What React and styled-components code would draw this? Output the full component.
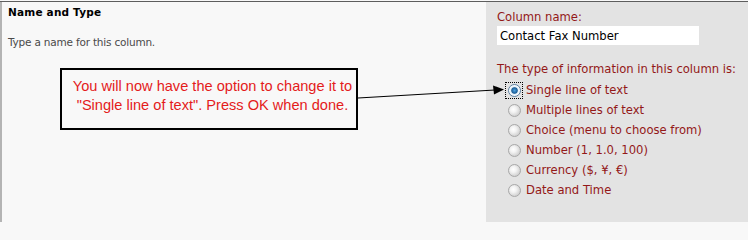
import styled, { createGlobalStyle } from "styled-components";

const GlobalStyle = createGlobalStyle`
  html, body {
    margin: 0;
    padding: 0;
    background: #f8f8f8;
    overflow: hidden;
  }
`;

const options = [
  "Single line of text",
  "Multiple lines of text",
  "Choice (menu to choose from)",
  "Number (1, 1.0, 100)",
  "Currency ($, ¥, €)",
  "Date and Time",
];

const App = () => {
  return (
    <>
      <GlobalStyle />
      <Page>
        <Section>
          <Heading>Name and Type</Heading>
          <Description>Type a name for this column.</Description>
        </Section>
        <Panel>
          <Label>Column name:</Label>
          <NameInput defaultValue="Contact Fax Number" />
          <Label $gap>The type of information in this column is:</Label>
          <OptionList>
            {options.map((opt, i) => (
              <Option key={opt}>
                <Focus $active={i === 0}>
                  <Radio $checked={i === 0} />
                </Focus>
                <span>{opt}</span>
              </Option>
            ))}
          </OptionList>
        </Panel>
        <Callout>
          You will now have the option to change it to
          <br />
          "Single line of text". Press OK when done.
        </Callout>
        <Arrow width="748" height="222" viewBox="0 0 748 222">
          <line x1="358" y1="98" x2="495" y2="90" stroke="#000" strokeWidth="1.2" />
          <polygon points="504,89.5 493,85.5 494,94.5" fill="#000" />
        </Arrow>
      </Page>
    </>
  );
};
export default App;

const Page = styled.div`
  position: relative;
  display: flex;
  width: 748px;
  height: 221px;
  margin-top: 1px;
  border-top: 1px solid #5e5e5e;
  box-sizing: border-box;
  font-family: "DejaVu Sans", Verdana, sans-serif;
`;
const Section = styled.div`
  width: 486px;
  border-left: 2px solid #b4b4b4;
  box-sizing: border-box;
  padding: 4px 0 0 6px;
  background: #f8f8f8;
`;
const Heading = styled.div`
  font-size: 10.5px;
  font-weight: bold;
  color: #000;
  letter-spacing: 0.2px;
`;
const Description = styled.div`
  margin-top: 18px;
  font-size: 10.5px;
  color: #4a4a4a;
  letter-spacing: -0.2px;
`;
const Panel = styled.div`
  flex: 1;
  background: #e3e3e3;
  padding: 9px 0 0 11px;
  color: #931818;
  font-size: 11.6px;
`;
const Label = styled.div`
  line-height: 13px;
  white-space: nowrap;
  margin-top: ${(p) => (p.$gap ? "18px" : "0")};
`;
const NameInput = styled.input`
  display: block;
  margin-top: 2px;
  width: 202px;
  height: 19px;
  box-sizing: border-box;
  border: none;
  background: #fff;
  padding: 0 3px;
  font-family: inherit;
  font-size: 11.6px;
  color: #000;
  outline: none;
`;
const OptionList = styled.div`
  margin-top: 4px;
  padding-left: 8px;
`;
const Option = styled.div`
  display: flex;
  align-items: center;
  height: 20px;
  gap: 3px;
  white-space: nowrap;
`;
const Focus = styled.span`
  display: flex;
  align-items: center;
  justify-content: center;
  width: 18px;
  height: 17px;
  box-sizing: border-box;
  border: 1px dotted ${(p) => (p.$active ? "#000" : "transparent")};
`;
const Radio = styled.span`
  width: 13px;
  height: 13px;
  border-radius: 50%;
  box-sizing: border-box;
  border: 1px solid ${(p) => (p.$checked ? "#5a7fa0" : "#a8a8a8")};
  background: ${(p) =>
    p.$checked
      ? "radial-gradient(circle at 50% 50%, #4fa3e0 0, #1d5f98 2.8px, #e8f2fa 3.8px, #ffffff 6px)"
      : "radial-gradient(circle at 40% 40%, #ffffff 0, #f2f2f2 3px, #d4d4d4 6.5px)"};
`;
const Callout = styled.div`
  position: absolute;
  left: 60px;
  top: 66px;
  width: 298px;
  height: 62px;
  box-sizing: border-box;
  border: 2px solid #000;
  background: #f8f8f8;
  padding-top: 7px;
  padding-left: 7px;
  text-align: center;
  white-space: nowrap;
  font-family: "Liberation Sans", Arial, sans-serif;
  font-size: 14.6px;
  line-height: 19px;
  color: #e41b1b;
`;
const Arrow = styled.svg`
  position: absolute;
  left: 0;
  top: -2px;
  pointer-events: none;
`;
